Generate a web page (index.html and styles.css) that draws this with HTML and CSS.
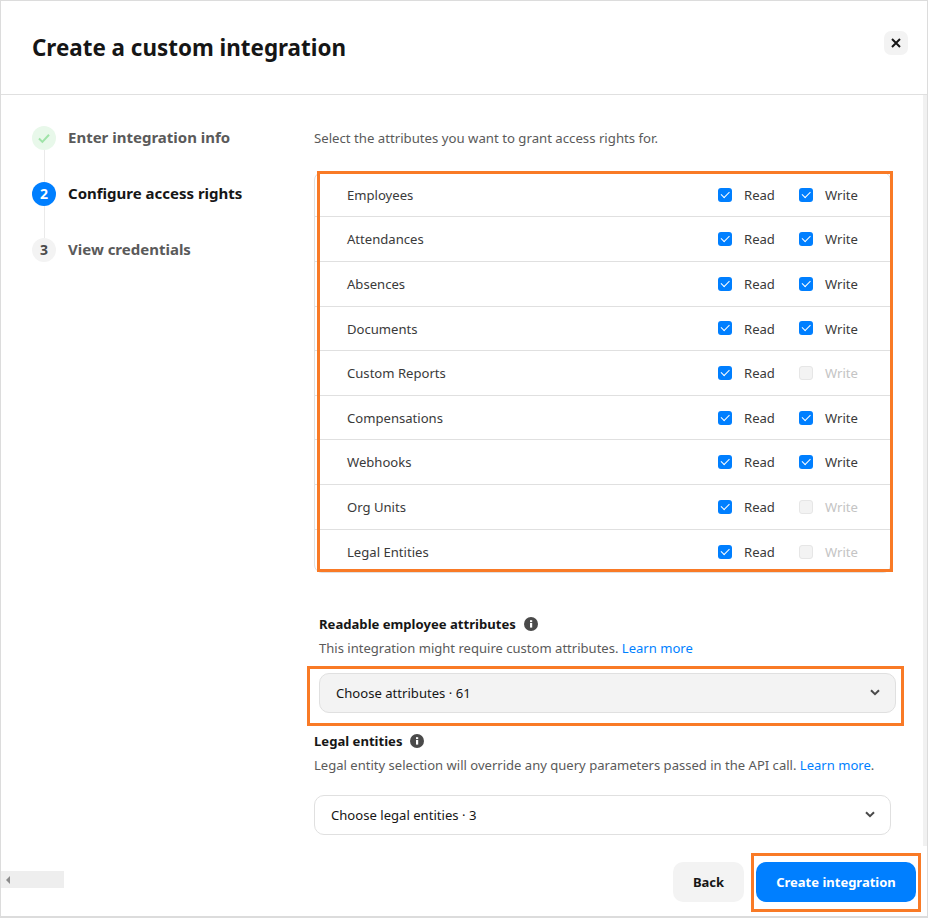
FILE: index.html
```html
<!DOCTYPE html>
<html lang="en">
<head>
<meta charset="utf-8">
<title>Create a custom integration</title>
<link rel="stylesheet" href="styles.css">
</head>
<body>
<div class="frame">
  <header class="header">
    <h1 class="title">Create a custom integration</h1>
    <button class="close" aria-label="Close">
      <svg width="10" height="10" viewBox="0 0 10 10"><path d="M1 1l8 8M9 1l-8 8" stroke="#161616" stroke-width="2" fill="none"/></svg>
    </button>
  </header>
  <div class="main">
    <nav class="steps">
      <div class="step">
        <span class="badge badge-done"><svg width="14" height="14" viewBox="0 0 14 14"><path d="M2 7.5l3.4 3.4L12 3.8" stroke="#9fe3a8" stroke-width="2" fill="none"/></svg></span>
        <span class="step-label">Enter integration info</span>
      </div>
      <div class="connector"></div>
      <div class="step">
        <span class="badge badge-active">2</span>
        <span class="step-label step-label-active">Configure access rights</span>
      </div>
      <div class="connector"></div>
      <div class="step">
        <span class="badge badge-todo">3</span>
        <span class="step-label">View credentials</span>
      </div>
    </nav>
    <section class="content">
      <p class="intro">Select the attributes you want to grant access rights for.</p>
      <div class="table-wrap">
        <div class="table">
          <div class="row"><span class="row-name">Employees</span><span class="check on"></span><span class="perm read">Read</span><span class="check on"></span><span class="perm">Write</span></div>
          <div class="row"><span class="row-name">Attendances</span><span class="check on"></span><span class="perm read">Read</span><span class="check on"></span><span class="perm">Write</span></div>
          <div class="row"><span class="row-name">Absences</span><span class="check on"></span><span class="perm read">Read</span><span class="check on"></span><span class="perm">Write</span></div>
          <div class="row"><span class="row-name">Documents</span><span class="check on"></span><span class="perm read">Read</span><span class="check on"></span><span class="perm">Write</span></div>
          <div class="row"><span class="row-name">Custom Reports</span><span class="check on"></span><span class="perm read">Read</span><span class="check off"></span><span class="perm perm-off">Write</span></div>
          <div class="row"><span class="row-name">Compensations</span><span class="check on"></span><span class="perm read">Read</span><span class="check on"></span><span class="perm">Write</span></div>
          <div class="row"><span class="row-name">Webhooks</span><span class="check on"></span><span class="perm read">Read</span><span class="check on"></span><span class="perm">Write</span></div>
          <div class="row"><span class="row-name">Org Units</span><span class="check on"></span><span class="perm read">Read</span><span class="check off"></span><span class="perm perm-off">Write</span></div>
          <div class="row"><span class="row-name">Legal Entities</span><span class="check on"></span><span class="perm read">Read</span><span class="check off"></span><span class="perm perm-off">Write</span></div>
        </div>
        <div class="mark mark-table"></div>
      </div>
      <div class="field field-readable">
        <div class="field-head"><span class="field-title">Readable employee attributes</span>
          <svg class="info" width="14" height="14" viewBox="0 0 14 14"><circle cx="7" cy="7" r="7" fill="#4a4a4a"/><rect x="6" y="6" width="2.2" height="4.6" fill="#fff"/><rect x="6" y="3.2" width="2.2" height="1.9" fill="#fff"/></svg>
        </div>
        <p class="field-desc">This integration might require custom attributes. <a class="link">Learn more</a></p>
        <div class="select-wrap">
          <div class="select select-filled"><span>Choose attributes · 61</span>
            <svg width="10" height="7" viewBox="0 0 10 7"><path d="M1 1.2l4 4 4-4" stroke="#4a4a4a" stroke-width="2" fill="none"/></svg>
          </div>
          <div class="mark mark-select"></div>
        </div>
      </div>
      <div class="field field-legal">
        <div class="field-head"><span class="field-title">Legal entities</span>
          <svg class="info" width="14" height="14" viewBox="0 0 14 14"><circle cx="7" cy="7" r="7" fill="#4a4a4a"/><rect x="6" y="6" width="2.2" height="4.6" fill="#fff"/><rect x="6" y="3.2" width="2.2" height="1.9" fill="#fff"/></svg>
        </div>
        <p class="field-desc">Legal entity selection will override any query parameters passed in the API call. <a class="link">Learn more</a>.</p>
        <div class="select"><span>Choose legal entities · 3</span>
          <svg width="10" height="7" viewBox="0 0 10 7"><path d="M1 1.2l4 4 4-4" stroke="#4a4a4a" stroke-width="2" fill="none"/></svg>
        </div>
      </div>
    </section>
    <div class="scroll-track"></div>
  </div>
  <footer class="footer">
    <div class="hscroll"><span class="hscroll-arrow"></span></div>
    <div class="actions">
      <button class="btn btn-back">Back</button>
      <div class="primary-wrap">
        <button class="btn btn-primary">Create integration</button>
        <div class="mark mark-btn"></div>
      </div>
    </div>
  </footer>
</div>
</body>
</html>
```
FILE: styles.css
```css
* { box-sizing: border-box; }
html, body { margin: 0; padding: 0; background: #fff; }
body { font-family: "Noto Sans", "Open Sans", sans-serif; color: #161616; overflow: hidden; }
.frame { width: 928px; height: 918px; border: 1px solid #dcdcdc; border-bottom-width: 2px; display: flex; flex-direction: column; }
.header { height: 94px; flex: none; border-bottom: 1px solid #e0e0e0; display: flex; align-items: center; justify-content: space-between; padding: 0 19px 0 31px; }
.title { margin: 0; font-size: 22.4px; font-weight: 700; line-height: 32px; color: #161616; }
.close { width: 24px; height: 24px; border: 0; border-radius: 7px; background: #f3f3f3; padding: 0; display: flex; align-items: center; justify-content: center; margin-bottom: 9px; }
.main { height: 751px; flex: none; display: flex; }
.steps { width: 313px; flex: none; padding: 31px 0 0 31px; }
.step { display: flex; align-items: center; gap: 12px; height: 24px; }
.badge { width: 24px; height: 24px; border-radius: 50%; flex: none; display: flex; align-items: center; justify-content: center; font-size: 14px; font-weight: 700; line-height: 1; }
.badge-done { background: #e8f8ea; }
.badge-active { background: #007fff; color: #fff; }
.badge-todo { background: #f3f3f3; color: #4a4a4a; }
.step-label { font-size: 15px; font-weight: 700; color: #5a5a5a; line-height: 20px; margin-top: -3px; }
.step-label-active { color: #161616; }
.connector { width: 1px; height: 32px; background: #eaeaea; margin-left: 12px; }
.content { width: 577px; flex: none; padding-top: 33px; }
.intro { margin: 0; font-size: 13.2px; line-height: 20px; color: #5a5a5a; }
.table-wrap { position: relative; margin-top: 23.8px; }
.table { border: 1px solid #e0e0e0; border-radius: 8px; overflow: hidden; height: 401.2px; }
.row { height: 44.6px; display: flex; align-items: center; padding: 0 31px 0 32px; border-bottom: 1px solid #e0e0e0; font-size: 13.1px; color: #3a3a3a; }
.row:last-child { border-bottom: 0; }
.row-name { flex: 1; padding-top: 0.4px; }
.check { width: 14px; height: 14px; border-radius: 3px; flex: none; margin-right: 12px; position: relative; }
.check.on { background: #007fff; }
.check.on::after { content: ""; position: absolute; left: 3.4px; top: 3px; width: 7.4px; height: 3.6px; border-left: 1.8px solid #fff; border-bottom: 1.8px solid #fff; transform: rotate(-45deg); }
.check.off { background: #f3f3f3; border: 1px solid #e6e6e6; }
.perm { width: 34px; padding-top: 0.4px; }
.perm.read { margin-right: 24px; width: 31px; }
.perm-off { color: #c4c4c4; }
.mark { position: absolute; border: 3px solid #f97a26; pointer-events: none; }
.mark-table { left: 3px; right: -2px; top: -1px; bottom: 1px; }
.field-readable { margin-top: 41px; padding-left: 5px; width: 582px; }
.field-head { display: flex; align-items: center; gap: 8px; height: 20px; }
.field-title { font-size: 13.1px; font-weight: 700; line-height: 20px; color: #161616; }
.field-desc { margin: 4px 0 0; font-size: 13.05px; line-height: 20px; color: #5a5a5a; }
.link { color: #007fff; }
.select-wrap { position: relative; margin-top: 15px; }
.select { height: 40px; border: 1px solid #e0e0e0; border-radius: 10px; display: flex; align-items: center; justify-content: space-between; padding: 0 15px 0 16px; font-size: 13.1px; color: #161616; }
.select-filled { background: #f3f3f3; }
.mark-select { left: -12px; right: -8px; top: -7px; bottom: -13px; }
.field-legal { margin-top: 18px; }
.field-legal .select { margin-top: 20px; }
.scroll-track { width: 4px; height: 751px; flex: none; margin-left: auto; background: #f1f1f1; }
.footer { flex: 1; display: flex; align-items: flex-start; justify-content: space-between; position: relative; }
.hscroll { width: 63px; height: 17px; background: #eeeeee; margin-top: 25px; display: flex; align-items: center; padding-left: 5px; }
.hscroll-arrow { width: 0; height: 0; border-style: solid; border-width: 4px 4px 4px 0; border-color: transparent #8c8c8c transparent transparent; }
.actions { display: flex; gap: 12px; margin-right: 11px; margin-top: 16px; }
.btn { height: 40px; border: 0; border-radius: 10px; font-family: inherit; font-size: 13px; font-weight: 700; }
.btn-back { width: 71px; background: #f3f3f3; color: #161616; }
.btn-primary { width: 160px; background: #007fff; color: #fff; display: block; }
.primary-wrap { position: relative; }
.mark-btn { left: -5px; right: -5px; top: -9px; bottom: -10px; }
```
